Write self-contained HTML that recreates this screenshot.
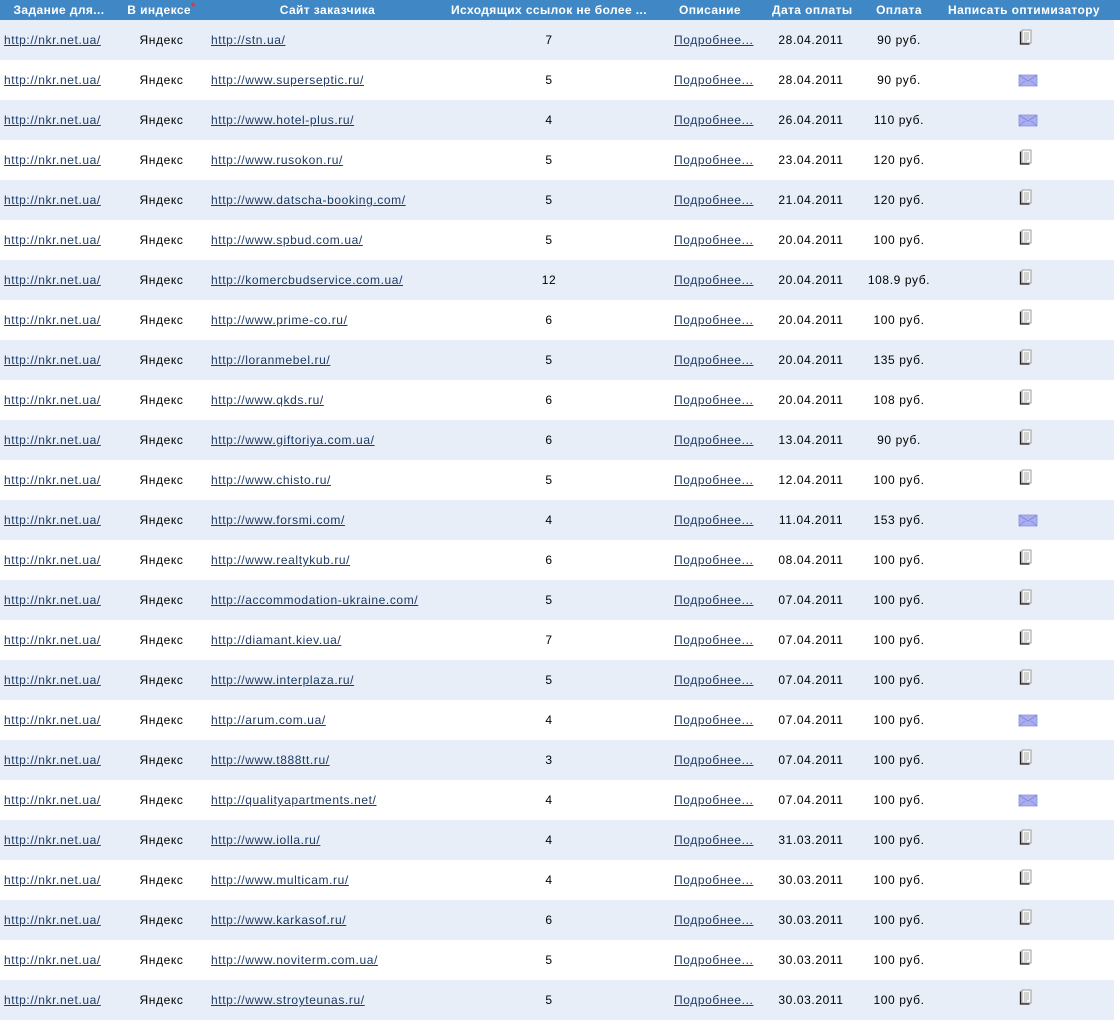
<!DOCTYPE html>
<html><head><meta charset="utf-8"><style>
body{margin:0;background:#fff;font-family:"Liberation Sans",Tahoma,sans-serif;font-size:12px;color:#000;width:1120px;height:1018px;overflow:hidden}
table{border-collapse:collapse;table-layout:fixed;width:1120px}
th{background:#3f88c5;color:#fff;font-weight:bold;height:20px;padding:0;white-space:nowrap;text-align:center;font-size:12px;letter-spacing:0.4px;overflow:visible}
td{height:40px;padding:0;white-space:nowrap;text-align:center;letter-spacing:0.6px}
td.l{text-align:left;padding-left:4px}
td.s{text-align:left;padding-left:6px}
td.p{text-align:left;padding-left:26px}
a{color:#1d3b66;text-decoration:underline}
sup{color:#d33;font-size:11px;vertical-align:4px;line-height:0}
.d{display:inline-block;vertical-align:middle;width:14px;height:16px;position:relative;top:-3px}
.e{display:inline-block;vertical-align:middle;width:20px;height:13px;position:relative;top:0}
tr.a td{background:#e7eef8}
tr td:last-child{background:#fff!important}
</style></head><body>
<table>
<colgroup><col style="width:118px"><col style="width:87px"><col style="width:245px"><col style="width:198px"><col style="width:124px"><col style="width:78px"><col style="width:98px"><col style="width:166px"><col style="width:6px"></colgroup>
<tr><th>Задание для...</th><th>В индексе<sup>*</sup></th><th>Сайт заказчика</th><th>Исходящих ссылок не более ...</th><th>Описание</th><th>Дата оплаты</th><th>Оплата</th><th style="text-align:left;padding-left:0">Написать оптимизатору</th><th style="background:#3f88c5"></th></tr>
</table>
<table>
<colgroup><col style="width:118px"><col style="width:87px"><col style="width:245px"><col style="width:198px"><col style="width:124px"><col style="width:78px"><col style="width:98px"><col style="width:166px"><col style="width:6px"></colgroup>
<tr class="a"><td class="l"><a>http://nkr.net.ua/</a></td><td>Яндекс</td><td class="s"><a>http://stn.ua/</a></td><td>7</td><td class="p"><a>Подробнее...</a></td><td>28.04.2011</td><td>90 руб.</td><td style="text-align:left;padding-left:71px"><svg class="d" viewBox="0 0 14 16"><path d="M3 1h9v13H3z" fill="#f8f8f6" stroke="#888" stroke-width=".8"/><path d="M1.5 2.5v12.5h9" fill="none" stroke="#222" stroke-width="1.3"/><path d="M5 4h5M5 6h5M5 8h5M5 10h5M5 12h3" stroke="#999" stroke-width=".7"/></svg></td><td></td></tr>
<tr><td class="l"><a>http://nkr.net.ua/</a></td><td>Яндекс</td><td class="s"><a>http://www.superseptic.ru/</a></td><td>5</td><td class="p"><a>Подробнее...</a></td><td>28.04.2011</td><td>90 руб.</td><td style="text-align:left;padding-left:70px"><svg class="e" viewBox="0 0 20 13"><path d="M1 1h18v11H1z" fill="#a9aef0" stroke="#8a90d8" stroke-width=".8"/><path d="M1 1l9 6 9-6M1 12l6-5M19 12l-6-5" fill="none" stroke="#7f86d6" stroke-width=".8"/></svg></td><td></td></tr>
<tr class="a"><td class="l"><a>http://nkr.net.ua/</a></td><td>Яндекс</td><td class="s"><a>http://www.hotel-plus.ru/</a></td><td>4</td><td class="p"><a>Подробнее...</a></td><td>26.04.2011</td><td>110 руб.</td><td style="text-align:left;padding-left:70px"><svg class="e" viewBox="0 0 20 13"><path d="M1 1h18v11H1z" fill="#a9aef0" stroke="#8a90d8" stroke-width=".8"/><path d="M1 1l9 6 9-6M1 12l6-5M19 12l-6-5" fill="none" stroke="#7f86d6" stroke-width=".8"/></svg></td><td></td></tr>
<tr><td class="l"><a>http://nkr.net.ua/</a></td><td>Яндекс</td><td class="s"><a>http://www.rusokon.ru/</a></td><td>5</td><td class="p"><a>Подробнее...</a></td><td>23.04.2011</td><td>120 руб.</td><td style="text-align:left;padding-left:71px"><svg class="d" viewBox="0 0 14 16"><path d="M3 1h9v13H3z" fill="#f8f8f6" stroke="#888" stroke-width=".8"/><path d="M1.5 2.5v12.5h9" fill="none" stroke="#222" stroke-width="1.3"/><path d="M5 4h5M5 6h5M5 8h5M5 10h5M5 12h3" stroke="#999" stroke-width=".7"/></svg></td><td></td></tr>
<tr class="a"><td class="l"><a>http://nkr.net.ua/</a></td><td>Яндекс</td><td class="s"><a>http://www.datscha-booking.com/</a></td><td>5</td><td class="p"><a>Подробнее...</a></td><td>21.04.2011</td><td>120 руб.</td><td style="text-align:left;padding-left:71px"><svg class="d" viewBox="0 0 14 16"><path d="M3 1h9v13H3z" fill="#f8f8f6" stroke="#888" stroke-width=".8"/><path d="M1.5 2.5v12.5h9" fill="none" stroke="#222" stroke-width="1.3"/><path d="M5 4h5M5 6h5M5 8h5M5 10h5M5 12h3" stroke="#999" stroke-width=".7"/></svg></td><td></td></tr>
<tr><td class="l"><a>http://nkr.net.ua/</a></td><td>Яндекс</td><td class="s"><a>http://www.spbud.com.ua/</a></td><td>5</td><td class="p"><a>Подробнее...</a></td><td>20.04.2011</td><td>100 руб.</td><td style="text-align:left;padding-left:71px"><svg class="d" viewBox="0 0 14 16"><path d="M3 1h9v13H3z" fill="#f8f8f6" stroke="#888" stroke-width=".8"/><path d="M1.5 2.5v12.5h9" fill="none" stroke="#222" stroke-width="1.3"/><path d="M5 4h5M5 6h5M5 8h5M5 10h5M5 12h3" stroke="#999" stroke-width=".7"/></svg></td><td></td></tr>
<tr class="a"><td class="l"><a>http://nkr.net.ua/</a></td><td>Яндекс</td><td class="s"><a>http://komercbudservice.com.ua/</a></td><td>12</td><td class="p"><a>Подробнее...</a></td><td>20.04.2011</td><td>108.9 руб.</td><td style="text-align:left;padding-left:71px"><svg class="d" viewBox="0 0 14 16"><path d="M3 1h9v13H3z" fill="#f8f8f6" stroke="#888" stroke-width=".8"/><path d="M1.5 2.5v12.5h9" fill="none" stroke="#222" stroke-width="1.3"/><path d="M5 4h5M5 6h5M5 8h5M5 10h5M5 12h3" stroke="#999" stroke-width=".7"/></svg></td><td></td></tr>
<tr><td class="l"><a>http://nkr.net.ua/</a></td><td>Яндекс</td><td class="s"><a>http://www.prime-co.ru/</a></td><td>6</td><td class="p"><a>Подробнее...</a></td><td>20.04.2011</td><td>100 руб.</td><td style="text-align:left;padding-left:71px"><svg class="d" viewBox="0 0 14 16"><path d="M3 1h9v13H3z" fill="#f8f8f6" stroke="#888" stroke-width=".8"/><path d="M1.5 2.5v12.5h9" fill="none" stroke="#222" stroke-width="1.3"/><path d="M5 4h5M5 6h5M5 8h5M5 10h5M5 12h3" stroke="#999" stroke-width=".7"/></svg></td><td></td></tr>
<tr class="a"><td class="l"><a>http://nkr.net.ua/</a></td><td>Яндекс</td><td class="s"><a>http://loranmebel.ru/</a></td><td>5</td><td class="p"><a>Подробнее...</a></td><td>20.04.2011</td><td>135 руб.</td><td style="text-align:left;padding-left:71px"><svg class="d" viewBox="0 0 14 16"><path d="M3 1h9v13H3z" fill="#f8f8f6" stroke="#888" stroke-width=".8"/><path d="M1.5 2.5v12.5h9" fill="none" stroke="#222" stroke-width="1.3"/><path d="M5 4h5M5 6h5M5 8h5M5 10h5M5 12h3" stroke="#999" stroke-width=".7"/></svg></td><td></td></tr>
<tr><td class="l"><a>http://nkr.net.ua/</a></td><td>Яндекс</td><td class="s"><a>http://www.qkds.ru/</a></td><td>6</td><td class="p"><a>Подробнее...</a></td><td>20.04.2011</td><td>108 руб.</td><td style="text-align:left;padding-left:71px"><svg class="d" viewBox="0 0 14 16"><path d="M3 1h9v13H3z" fill="#f8f8f6" stroke="#888" stroke-width=".8"/><path d="M1.5 2.5v12.5h9" fill="none" stroke="#222" stroke-width="1.3"/><path d="M5 4h5M5 6h5M5 8h5M5 10h5M5 12h3" stroke="#999" stroke-width=".7"/></svg></td><td></td></tr>
<tr class="a"><td class="l"><a>http://nkr.net.ua/</a></td><td>Яндекс</td><td class="s"><a>http://www.giftoriya.com.ua/</a></td><td>6</td><td class="p"><a>Подробнее...</a></td><td>13.04.2011</td><td>90 руб.</td><td style="text-align:left;padding-left:71px"><svg class="d" viewBox="0 0 14 16"><path d="M3 1h9v13H3z" fill="#f8f8f6" stroke="#888" stroke-width=".8"/><path d="M1.5 2.5v12.5h9" fill="none" stroke="#222" stroke-width="1.3"/><path d="M5 4h5M5 6h5M5 8h5M5 10h5M5 12h3" stroke="#999" stroke-width=".7"/></svg></td><td></td></tr>
<tr><td class="l"><a>http://nkr.net.ua/</a></td><td>Яндекс</td><td class="s"><a>http://www.chisto.ru/</a></td><td>5</td><td class="p"><a>Подробнее...</a></td><td>12.04.2011</td><td>100 руб.</td><td style="text-align:left;padding-left:71px"><svg class="d" viewBox="0 0 14 16"><path d="M3 1h9v13H3z" fill="#f8f8f6" stroke="#888" stroke-width=".8"/><path d="M1.5 2.5v12.5h9" fill="none" stroke="#222" stroke-width="1.3"/><path d="M5 4h5M5 6h5M5 8h5M5 10h5M5 12h3" stroke="#999" stroke-width=".7"/></svg></td><td></td></tr>
<tr class="a"><td class="l"><a>http://nkr.net.ua/</a></td><td>Яндекс</td><td class="s"><a>http://www.forsmi.com/</a></td><td>4</td><td class="p"><a>Подробнее...</a></td><td>11.04.2011</td><td>153 руб.</td><td style="text-align:left;padding-left:70px"><svg class="e" viewBox="0 0 20 13"><path d="M1 1h18v11H1z" fill="#a9aef0" stroke="#8a90d8" stroke-width=".8"/><path d="M1 1l9 6 9-6M1 12l6-5M19 12l-6-5" fill="none" stroke="#7f86d6" stroke-width=".8"/></svg></td><td></td></tr>
<tr><td class="l"><a>http://nkr.net.ua/</a></td><td>Яндекс</td><td class="s"><a>http://www.realtykub.ru/</a></td><td>6</td><td class="p"><a>Подробнее...</a></td><td>08.04.2011</td><td>100 руб.</td><td style="text-align:left;padding-left:71px"><svg class="d" viewBox="0 0 14 16"><path d="M3 1h9v13H3z" fill="#f8f8f6" stroke="#888" stroke-width=".8"/><path d="M1.5 2.5v12.5h9" fill="none" stroke="#222" stroke-width="1.3"/><path d="M5 4h5M5 6h5M5 8h5M5 10h5M5 12h3" stroke="#999" stroke-width=".7"/></svg></td><td></td></tr>
<tr class="a"><td class="l"><a>http://nkr.net.ua/</a></td><td>Яндекс</td><td class="s"><a>http://accommodation-ukraine.com/</a></td><td>5</td><td class="p"><a>Подробнее...</a></td><td>07.04.2011</td><td>100 руб.</td><td style="text-align:left;padding-left:71px"><svg class="d" viewBox="0 0 14 16"><path d="M3 1h9v13H3z" fill="#f8f8f6" stroke="#888" stroke-width=".8"/><path d="M1.5 2.5v12.5h9" fill="none" stroke="#222" stroke-width="1.3"/><path d="M5 4h5M5 6h5M5 8h5M5 10h5M5 12h3" stroke="#999" stroke-width=".7"/></svg></td><td></td></tr>
<tr><td class="l"><a>http://nkr.net.ua/</a></td><td>Яндекс</td><td class="s"><a>http://diamant.kiev.ua/</a></td><td>7</td><td class="p"><a>Подробнее...</a></td><td>07.04.2011</td><td>100 руб.</td><td style="text-align:left;padding-left:71px"><svg class="d" viewBox="0 0 14 16"><path d="M3 1h9v13H3z" fill="#f8f8f6" stroke="#888" stroke-width=".8"/><path d="M1.5 2.5v12.5h9" fill="none" stroke="#222" stroke-width="1.3"/><path d="M5 4h5M5 6h5M5 8h5M5 10h5M5 12h3" stroke="#999" stroke-width=".7"/></svg></td><td></td></tr>
<tr class="a"><td class="l"><a>http://nkr.net.ua/</a></td><td>Яндекс</td><td class="s"><a>http://www.interplaza.ru/</a></td><td>5</td><td class="p"><a>Подробнее...</a></td><td>07.04.2011</td><td>100 руб.</td><td style="text-align:left;padding-left:71px"><svg class="d" viewBox="0 0 14 16"><path d="M3 1h9v13H3z" fill="#f8f8f6" stroke="#888" stroke-width=".8"/><path d="M1.5 2.5v12.5h9" fill="none" stroke="#222" stroke-width="1.3"/><path d="M5 4h5M5 6h5M5 8h5M5 10h5M5 12h3" stroke="#999" stroke-width=".7"/></svg></td><td></td></tr>
<tr><td class="l"><a>http://nkr.net.ua/</a></td><td>Яндекс</td><td class="s"><a>http://arum.com.ua/</a></td><td>4</td><td class="p"><a>Подробнее...</a></td><td>07.04.2011</td><td>100 руб.</td><td style="text-align:left;padding-left:70px"><svg class="e" viewBox="0 0 20 13"><path d="M1 1h18v11H1z" fill="#a9aef0" stroke="#8a90d8" stroke-width=".8"/><path d="M1 1l9 6 9-6M1 12l6-5M19 12l-6-5" fill="none" stroke="#7f86d6" stroke-width=".8"/></svg></td><td></td></tr>
<tr class="a"><td class="l"><a>http://nkr.net.ua/</a></td><td>Яндекс</td><td class="s"><a>http://www.t888tt.ru/</a></td><td>3</td><td class="p"><a>Подробнее...</a></td><td>07.04.2011</td><td>100 руб.</td><td style="text-align:left;padding-left:71px"><svg class="d" viewBox="0 0 14 16"><path d="M3 1h9v13H3z" fill="#f8f8f6" stroke="#888" stroke-width=".8"/><path d="M1.5 2.5v12.5h9" fill="none" stroke="#222" stroke-width="1.3"/><path d="M5 4h5M5 6h5M5 8h5M5 10h5M5 12h3" stroke="#999" stroke-width=".7"/></svg></td><td></td></tr>
<tr><td class="l"><a>http://nkr.net.ua/</a></td><td>Яндекс</td><td class="s"><a>http://qualityapartments.net/</a></td><td>4</td><td class="p"><a>Подробнее...</a></td><td>07.04.2011</td><td>100 руб.</td><td style="text-align:left;padding-left:70px"><svg class="e" viewBox="0 0 20 13"><path d="M1 1h18v11H1z" fill="#a9aef0" stroke="#8a90d8" stroke-width=".8"/><path d="M1 1l9 6 9-6M1 12l6-5M19 12l-6-5" fill="none" stroke="#7f86d6" stroke-width=".8"/></svg></td><td></td></tr>
<tr class="a"><td class="l"><a>http://nkr.net.ua/</a></td><td>Яндекс</td><td class="s"><a>http://www.iolla.ru/</a></td><td>4</td><td class="p"><a>Подробнее...</a></td><td>31.03.2011</td><td>100 руб.</td><td style="text-align:left;padding-left:71px"><svg class="d" viewBox="0 0 14 16"><path d="M3 1h9v13H3z" fill="#f8f8f6" stroke="#888" stroke-width=".8"/><path d="M1.5 2.5v12.5h9" fill="none" stroke="#222" stroke-width="1.3"/><path d="M5 4h5M5 6h5M5 8h5M5 10h5M5 12h3" stroke="#999" stroke-width=".7"/></svg></td><td></td></tr>
<tr><td class="l"><a>http://nkr.net.ua/</a></td><td>Яндекс</td><td class="s"><a>http://www.multicam.ru/</a></td><td>4</td><td class="p"><a>Подробнее...</a></td><td>30.03.2011</td><td>100 руб.</td><td style="text-align:left;padding-left:71px"><svg class="d" viewBox="0 0 14 16"><path d="M3 1h9v13H3z" fill="#f8f8f6" stroke="#888" stroke-width=".8"/><path d="M1.5 2.5v12.5h9" fill="none" stroke="#222" stroke-width="1.3"/><path d="M5 4h5M5 6h5M5 8h5M5 10h5M5 12h3" stroke="#999" stroke-width=".7"/></svg></td><td></td></tr>
<tr class="a"><td class="l"><a>http://nkr.net.ua/</a></td><td>Яндекс</td><td class="s"><a>http://www.karkasof.ru/</a></td><td>6</td><td class="p"><a>Подробнее...</a></td><td>30.03.2011</td><td>100 руб.</td><td style="text-align:left;padding-left:71px"><svg class="d" viewBox="0 0 14 16"><path d="M3 1h9v13H3z" fill="#f8f8f6" stroke="#888" stroke-width=".8"/><path d="M1.5 2.5v12.5h9" fill="none" stroke="#222" stroke-width="1.3"/><path d="M5 4h5M5 6h5M5 8h5M5 10h5M5 12h3" stroke="#999" stroke-width=".7"/></svg></td><td></td></tr>
<tr><td class="l"><a>http://nkr.net.ua/</a></td><td>Яндекс</td><td class="s"><a>http://www.noviterm.com.ua/</a></td><td>5</td><td class="p"><a>Подробнее...</a></td><td>30.03.2011</td><td>100 руб.</td><td style="text-align:left;padding-left:71px"><svg class="d" viewBox="0 0 14 16"><path d="M3 1h9v13H3z" fill="#f8f8f6" stroke="#888" stroke-width=".8"/><path d="M1.5 2.5v12.5h9" fill="none" stroke="#222" stroke-width="1.3"/><path d="M5 4h5M5 6h5M5 8h5M5 10h5M5 12h3" stroke="#999" stroke-width=".7"/></svg></td><td></td></tr>
<tr class="a"><td class="l"><a>http://nkr.net.ua/</a></td><td>Яндекс</td><td class="s"><a>http://www.stroyteunas.ru/</a></td><td>5</td><td class="p"><a>Подробнее...</a></td><td>30.03.2011</td><td>100 руб.</td><td style="text-align:left;padding-left:71px"><svg class="d" viewBox="0 0 14 16"><path d="M3 1h9v13H3z" fill="#f8f8f6" stroke="#888" stroke-width=".8"/><path d="M1.5 2.5v12.5h9" fill="none" stroke="#222" stroke-width="1.3"/><path d="M5 4h5M5 6h5M5 8h5M5 10h5M5 12h3" stroke="#999" stroke-width=".7"/></svg></td><td></td></tr>
</table>
</body></html>
